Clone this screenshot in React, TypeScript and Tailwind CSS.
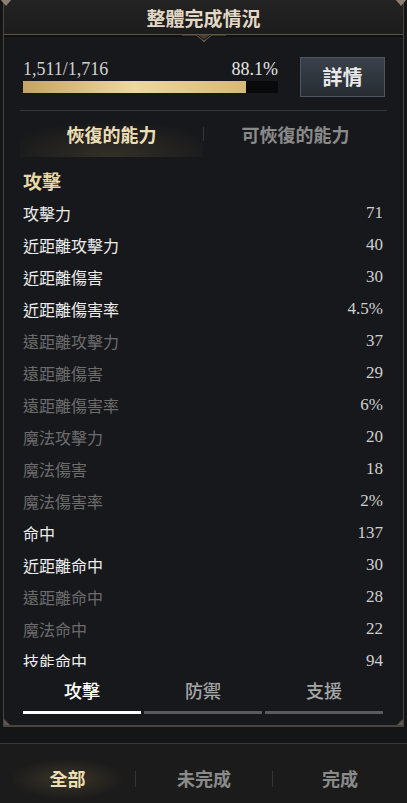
import React from 'react';

type Stat = { label: string; value: string; active: boolean };

const stats: Stat[] = [
  { label: '攻擊力', value: '71', active: true },
  { label: '近距離攻擊力', value: '40', active: true },
  { label: '近距離傷害', value: '30', active: true },
  { label: '近距離傷害率', value: '4.5%', active: true },
  { label: '遠距離攻擊力', value: '37', active: false },
  { label: '遠距離傷害', value: '29', active: false },
  { label: '遠距離傷害率', value: '6%', active: false },
  { label: '魔法攻擊力', value: '20', active: false },
  { label: '魔法傷害', value: '18', active: false },
  { label: '魔法傷害率', value: '2%', active: false },
  { label: '命中', value: '137', active: true },
  { label: '近距離命中', value: '30', active: true },
  { label: '遠距離命中', value: '28', active: false },
  { label: '魔法命中', value: '22', active: false },
  { label: '技能命中', value: '94', active: true }
];

const cjk = "font-['Noto_Sans_CJK_TC','Noto_Sans',sans-serif]";
const serif = "font-['Liberation_Serif',serif]";

const Ornament = () => (
  <svg width="44" height="9" viewBox="0 0 44 9" className="absolute left-1/2 -translate-x-1/2 -top-[1px]">
    <path d="M0 1 L14 1 L22 7 L30 1 L44 1" fill="none" stroke="#6b5e49" strokeWidth="1" />
    <path d="M16 1 L22 5 L28 1 Z" fill="#4a4132" />
    <path d="M19 5 L22 8 L25 5" fill="none" stroke="#5d523f" strokeWidth="1" />
  </svg>
);

export default function App() {
  const current = 1511;
  const total = 1716;
  const pct = (current / total) * 100;

  return (
    <div className={`w-[407px] h-[803px] bg-[#141517] flex flex-col overflow-hidden ${cjk}`}>
      {/* main panel */}
      <div className="relative mx-[3px] h-[727px] flex flex-col border-x border-b-2 border-[#4a433e] bg-[#17181b]">
        <div className="absolute -left-[4px] -top-[1px] w-0 h-0 border-l-[6px] border-l-transparent border-r-[6px] border-r-transparent border-t-[7px] border-t-[#8a7f70]" />
        <div className="absolute -right-[4px] -top-[1px] w-0 h-0 border-l-[6px] border-l-transparent border-r-[6px] border-r-transparent border-t-[7px] border-t-[#8a7f70]" />
        <div className="absolute left-0 bottom-0 w-0 h-0 border-b-[6px] border-b-[#5e5650] border-r-[6px] border-r-transparent" />
        <div className="absolute right-0 bottom-0 w-0 h-0 border-b-[6px] border-b-[#5e5650] border-l-[6px] border-l-transparent" />

        {/* header */}
        <div className="h-[34px] flex items-center justify-center bg-gradient-to-b from-[#232323] to-[#1c1c1c]">
          <span className="text-[19px] font-bold text-[#e2d8c5] leading-none">整體完成情況</span>
        </div>
        <div className="relative h-[3px] border-t border-[#5e5342] bg-[#0f0f10]">
          <Ornament />
        </div>

        {/* progress */}
        <div className="flex items-start pl-[19px] pr-[18px] pt-[20px]">
          <div className="flex-1 pt-[1px]">
            <div className={`flex justify-between items-end h-[22px] text-[18px] leading-[22px] text-[#d2d2d2] ${serif}`}>
              <span>1,511/1,716</span>
              <span className="text-[#e6e6e6]">88.1%</span>
            </div>
            <div className="mt-[1px] h-[12px] bg-[#08090a]">
              <div
                className="h-full bg-gradient-to-r from-[#c4a466] via-[#ecd8a3] to-[#d6b978]"
                style={{ width: `${pct - 0.5}%` }}
              />
            </div>
          </div>
          <button className="ml-[22px] w-[85px] h-[40px] border border-[#4d5561] bg-gradient-to-b from-[#3a414a] to-[#272c33] text-[20px] font-bold text-[#e8e8e8]">
            詳情
          </button>
        </div>
        <div className="mt-[13px] mx-[16px] h-px bg-[#36373a]" />

        {/* recovered tabs */}
        <div className="mx-[16px] h-[46px] flex items-center">
          <div className="flex-1 h-full flex items-center justify-center bg-[radial-gradient(ellipse_75%_100%_at_50%_100%,rgba(190,160,95,0.18),transparent_80%)]">
            <span className="text-[18px] font-bold text-[#ecdeb4]">恢復的能力</span>
          </div>
          <div className="w-px h-[14px] bg-[#38383a]" />
          <div className="flex-1 h-full flex items-center justify-center">
            <span className="text-[18px] font-bold text-[#8a8a8a]">可恢復的能力</span>
          </div>
        </div>

        {/* list */}
        <div className="h-[510px] overflow-hidden pt-[8px] pl-[19px] pr-[20px]">
          <div className="h-[32px] flex items-center">
            <span className="text-[19px] font-bold text-[#e7d8a9]">攻擊</span>
          </div>
          {stats.map((s) => (
            <div key={s.label} className="h-[32px] flex items-center justify-between">
              <span className={`text-[16px] ${s.active ? 'text-[#ededed]' : 'text-[#6c6c6c]'}`}>{s.label}</span>
              <span className={`text-[17px] text-[#cfcfcf] ${serif}`}>{s.value}</span>
            </div>
          ))}
        </div>

        {/* category tabs */}
        <div className="pl-[19px] pr-[20px] pt-[10px] grid grid-cols-3 gap-x-[3px]">
          {['攻擊', '防禦', '支援'].map((t, i) => (
            <div key={t} className="flex flex-col items-center">
              <span className={`text-[18px] leading-[26px] font-medium ${i === 0 ? 'text-white' : 'text-[#a6a6a6]'}`}>{t}</span>
              <div className={`mt-[8px] w-full h-[3px] ${i === 0 ? 'bg-white' : 'bg-[#5a5b5d]'}`} />
            </div>
          ))}
        </div>
      </div>

      {/* footer */}
      <div className="h-[16px]" />
      <div className="h-px bg-[#39383a]" />
      <div className="flex-1 bg-[#1b1b1b] flex items-center pt-[10px]">
        <div className="w-[135px] h-[48px] flex items-center justify-center bg-[radial-gradient(ellipse_50%_50%_at_50%_50%,rgba(190,160,90,0.2),transparent_85%)]">
          <span className="text-[18px] font-bold text-[#ecdfb5]">全部</span>
        </div>
        <div className="w-px h-[16px] bg-[#343434]" />
        <div className="w-[136px] flex items-center justify-center">
          <span className="text-[18px] font-bold text-[#8a8a8a]">未完成</span>
        </div>
        <div className="w-px h-[16px] bg-[#343434]" />
        <div className="flex-1 flex items-center justify-center">
          <span className="text-[18px] font-bold text-[#8a8a8a]">完成</span>
        </div>
      </div>
    </div>
  );
}
